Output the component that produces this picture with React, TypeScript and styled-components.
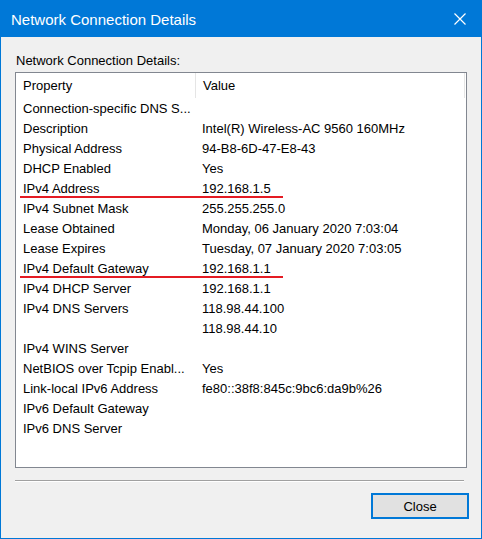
import styled, { createGlobalStyle } from 'styled-components';

const GlobalStyle = createGlobalStyle`
  html, body {
    margin: 0;
    padding: 0;
    background: #ffffff;
  }
  * {
    box-sizing: border-box;
  }
`;

interface Detail {
  property: string;
  value: string;
  marked?: boolean;
}

const details: Detail[] = [
  { property: 'Connection-specific DNS S...', value: '' },
  { property: 'Description', value: 'Intel(R) Wireless-AC 9560 160MHz' },
  { property: 'Physical Address', value: '94-B8-6D-47-E8-43' },
  { property: 'DHCP Enabled', value: 'Yes' },
  { property: 'IPv4 Address', value: '192.168.1.5', marked: true },
  { property: 'IPv4 Subnet Mask', value: '255.255.255.0' },
  { property: 'Lease Obtained', value: 'Monday, 06 January 2020 7:03:04' },
  { property: 'Lease Expires', value: 'Tuesday, 07 January 2020 7:03:05' },
  { property: 'IPv4 Default Gateway', value: '192.168.1.1', marked: true },
  { property: 'IPv4 DHCP Server', value: '192.168.1.1' },
  { property: 'IPv4 DNS Servers', value: '118.98.44.100' },
  { property: '', value: '118.98.44.10' },
  { property: 'IPv4 WINS Server', value: '' },
  { property: 'NetBIOS over Tcpip Enabl...', value: 'Yes' },
  { property: 'Link-local IPv6 Address', value: 'fe80::38f8:845c:9bc6:da9b%26' },
  { property: 'IPv6 Default Gateway', value: '' },
  { property: 'IPv6 DNS Server', value: '' },
];

export default function App() {
  return (
    <>
      <GlobalStyle />
      <Window>
        <TitleBar>
          <Title>Network Connection Details</Title>
          <CloseIcon aria-label="Close">
            <svg width="12" height="12" viewBox="0 0 12 12">
              <path d="M0.5 0.5 L11.5 11.5 M11.5 0.5 L0.5 11.5" stroke="#ffffff" strokeWidth="1.2" />
            </svg>
          </CloseIcon>
        </TitleBar>
        <Body>
          <Label>Network Connection Details:</Label>
          <ListBox>
            <Header>
              <HeaderCell width={180}>Property</HeaderCell>
              <HeaderCell>Value</HeaderCell>
            </Header>
            {details.map((d, i) => (
              <Row key={i} marked={d.marked}>
                <PropCell>{d.property}</PropCell>
                <ValueCell>{d.value}</ValueCell>
              </Row>
            ))}
          </ListBox>
          <Separator />
          <Footer>
            <Button>Close</Button>
          </Footer>
        </Body>
      </Window>
    </>
  );
}

const Window = styled.div`
  width: 482px;
  height: 539px;
  display: flex;
  flex-direction: column;
  background: #f0f0f0;
  border: 1px solid #0078d7;
  border-top: 0;
  font-family: 'Liberation Sans', Arial, sans-serif;
  color: #000000;
`;

const TitleBar = styled.div`
  height: 37px;
  margin: 0 -1px;
  padding: 0 15px 0 11px;
  display: flex;
  align-items: center;
  justify-content: space-between;
  background: #0078d7;
`;

const Title = styled.div`
  font-size: 15px;
  color: #ffffff;
  margin-top: 2px;
`;

const CloseIcon = styled.div`
  width: 14px;
  height: 14px;
  display: flex;
  align-items: center;
  justify-content: center;
  margin-top: 1px;
`;

const Body = styled.div`
  flex: 1;
  display: flex;
  flex-direction: column;
  padding: 16px 14px 0 14px;
`;

const Label = styled.div`
  font-size: 13px;
  line-height: 16px;
  padding-left: 1px;
  margin-bottom: 3px;
`;

const ListBox = styled.div`
  width: 452px;
  height: 396px;
  background: #ffffff;
  border: 1px solid #828790;
  overflow: hidden;
`;

const Header = styled.div`
  height: 25px;
  display: flex;
  align-items: center;
  border-right: 1px solid #e5e5e5;
  margin-right: 1px;
`;

const HeaderCell = styled.div<{ width?: number }>`
  ${({ width }) => (width ? `width: ${width}px;` : 'flex: 1;')}
  height: 100%;
  display: flex;
  align-items: center;
  padding-left: 7px;
  font-size: 13px;
  border-right: ${({ width }) => (width ? '1px solid #e5e5e5' : '0')};
`;

const Row = styled.div<{ marked?: boolean }>`
  position: relative;
  height: 20px;
  display: flex;
  align-items: center;
  font-size: 13px;

  ${({ marked }) =>
    marked &&
    `
    &::after {
      content: '';
      position: absolute;
      left: 4px;
      width: 263px;
      bottom: 0;
      height: 2px;
      background: #e41b23;
    }
  `}
`;

const PropCell = styled.div`
  width: 180px;
  padding-left: 7px;
  white-space: nowrap;
  overflow: hidden;
`;

const ValueCell = styled.div`
  flex: 1;
  padding-left: 6px;
  white-space: nowrap;
`;

const Separator = styled.div`
  width: 449px;
  margin-top: 12px;
  border-top: 1px solid #a0a0a0;
  border-bottom: 1px solid #ffffff;
`;

const Footer = styled.div`
  display: flex;
  justify-content: flex-end;
  margin-top: 11px;
  padding-right: 0;
`;

const Button = styled.button`
  width: 98px;
  height: 26px;
  margin-right: -2px;
  background: #e1e1e1;
  border: 2px solid #0078d7;
  font-family: 'Liberation Sans', Arial, sans-serif;
  font-size: 13px;
  color: #000000;
  padding: 0;
`;
